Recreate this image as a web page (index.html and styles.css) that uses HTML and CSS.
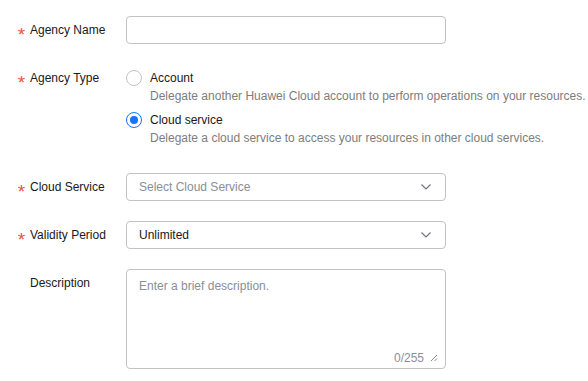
FILE: index.html
```html
<!DOCTYPE html>
<html lang="en">
<head>
    <meta charset="UTF-8">
    <title>Create Agency</title>
    <link rel="stylesheet" href="styles.css">
</head>
<body>
    <form class="agency-form">
        <div class="form-item">
            <label class="form-label required">Agency Name</label>
            <div class="form-control">
                <input class="text-input" type="text">
            </div>
        </div>

        <div class="form-item">
            <label class="form-label required">Agency Type</label>
            <div class="form-control radio-group">
                <div class="radio-option">
                    <label class="radio">
                        <span class="radio-dot"></span>
                        <span>Account</span>
                    </label>
                    <div class="radio-desc">Delegate another Huawei Cloud account to perform operations on your resources.</div>
                </div>
                <div class="radio-option">
                    <label class="radio checked">
                        <span class="radio-dot"></span>
                        <span>Cloud service</span>
                    </label>
                    <div class="radio-desc">Delegate a cloud service to access your resources in other cloud services.</div>
                </div>
            </div>
        </div>

        <div class="form-item">
            <label class="form-label required">Cloud Service</label>
            <div class="form-control">
                <div class="select placeholder">
                    <span>Select Cloud Service</span>
                    <svg class="chevron" width="10" height="6" viewBox="0 0 10 6"><path d="M0.5 0.5 L5 5 L9.5 0.5" fill="none" stroke="#71757f" stroke-width="1.2"/></svg>
                </div>
            </div>
        </div>

        <div class="form-item">
            <label class="form-label required">Validity Period</label>
            <div class="form-control">
                <div class="select">
                    <span>Unlimited</span>
                    <svg class="chevron" width="10" height="6" viewBox="0 0 10 6"><path d="M0.5 0.5 L5 5 L9.5 0.5" fill="none" stroke="#71757f" stroke-width="1.2"/></svg>
                </div>
            </div>
        </div>

        <div class="form-item">
            <label class="form-label">Description</label>
            <div class="form-control">
                <div class="textarea-wrap">
                    <textarea class="textarea" placeholder="Enter a brief description."></textarea>
                    <div class="textarea-footer">
                        <span class="counter">0/255</span>
                        <svg class="grip" width="8" height="8" viewBox="0 0 8 8"><path d="M7 1 L1 7 M7 4.5 L4.5 7" stroke="#8a8e99" stroke-width="1"/></svg>
                    </div>
                </div>
            </div>
        </div>
    </form>
</body>
</html>
```

FILE: styles.css
```css
body {
    margin: 0;
    font-family: 'Liberation Sans', Arial, sans-serif;
    font-size: 12px;
    color: #191919;
    background-color: #ffffff;
}

.agency-form {
    padding: 16px 0 0 16px;
}

.form-item {
    display: flex;
    margin-bottom: 20px;
}

.form-label {
    width: 110px;
    flex-shrink: 0;
    line-height: 28px;
    padding-left: 14px;
    box-sizing: border-box;
}

.form-label.required {
    padding-left: 0;
}

.form-label.required::before {
    content: "*";
    display: inline-block;
    width: 11px;
    margin-right: 3px;
    text-align: center;
    color: #f0504a;
    font-size: 19px;
    vertical-align: -7px;
    line-height: 12px;
}

.form-control {
    width: 320px;
}

.text-input,
.select {
    width: 320px;
    height: 28px;
    box-sizing: border-box;
    border: 1px solid #c2c2c2;
    border-radius: 4px;
    padding: 0 12px;
    font: inherit;
    color: #191919;
    outline: none;
}

.select {
    display: flex;
    align-items: center;
    justify-content: space-between;
    padding-right: 14px;
}

.select.placeholder {
    color: #8a8e99;
}

/* radio group */
.radio-group {
    width: auto;
    padding: 6px 0 5px;
}

.radio-option + .radio-option {
    margin-top: 6px;
}

.radio {
    display: flex;
    align-items: center;
    line-height: 16px;
}

.radio-dot {
    width: 16px;
    height: 16px;
    box-sizing: border-box;
    border: 1px solid #c2c2c2;
    border-radius: 50%;
    margin-right: 8px;
    display: flex;
    align-items: center;
    justify-content: center;
}

.radio.checked .radio-dot {
    border-color: #1476ff;
}

.radio.checked .radio-dot::after {
    content: "";
    width: 8px;
    height: 8px;
    border-radius: 50%;
    background-color: #1476ff;
}

.radio-desc {
    padding-left: 24px;
    line-height: 20px;
    color: #7d7d7d;
    white-space: nowrap;
}

/* textarea */
.textarea-wrap {
    position: relative;
    width: 320px;
    height: 100px;
    box-sizing: border-box;
    border: 1px solid #c2c2c2;
    border-radius: 4px;
}

.textarea {
    display: block;
    width: 100%;
    height: 100%;
    box-sizing: border-box;
    border: none;
    outline: none;
    resize: none;
    padding: 8px 12px;
    font: inherit;
    line-height: 16px;
    background: transparent;
}

.textarea::placeholder {
    color: #8a8e99;
}

.textarea-footer {
    position: absolute;
    right: 7px;
    bottom: 3px;
    display: flex;
    align-items: center;
    gap: 6px;
    color: #8a8e99;
}
```
